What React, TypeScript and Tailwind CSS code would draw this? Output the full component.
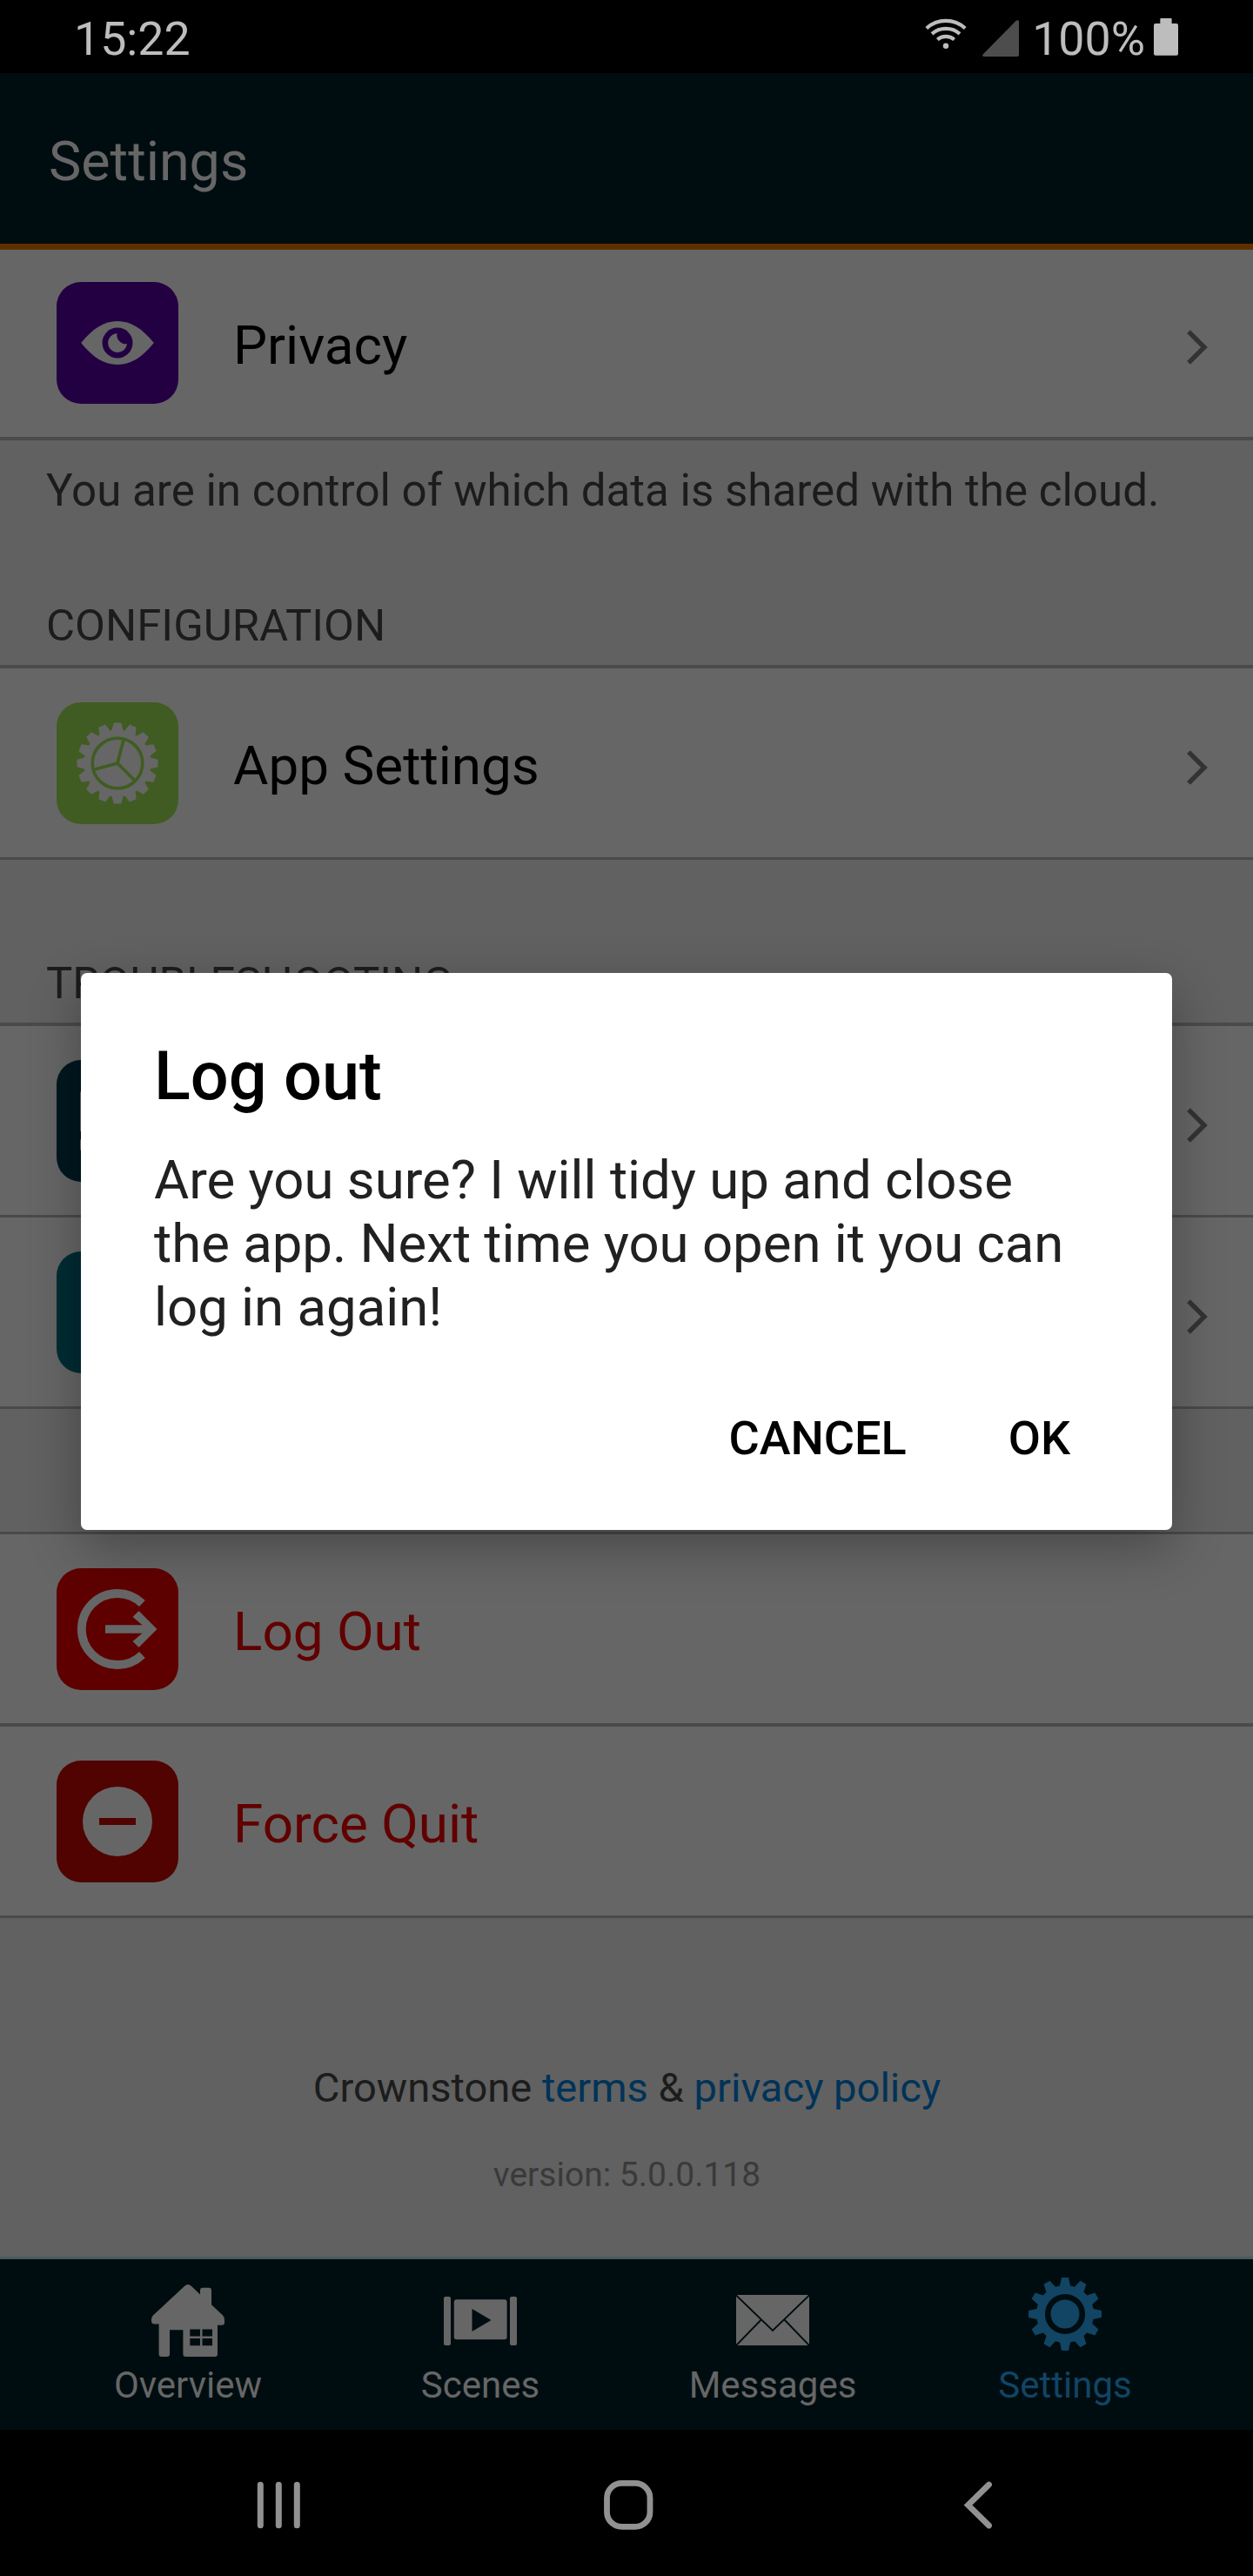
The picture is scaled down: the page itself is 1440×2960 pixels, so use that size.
import React from "react";

function gearPath(cx: number, cy: number, teeth: number, outer: number, root: number, top: number, base: number) {
  const points: string[] = [];
  for (let i = 0; i < teeth; i++) {
    const a = (i * 2 * Math.PI) / teeth;
    const corners = [
      [-base / 2, -root],
      [-top / 2, -outer],
      [top / 2, -outer],
      [base / 2, -root],
    ];
    for (const [x, y] of corners) {
      const px = cx + x * Math.cos(a) - y * Math.sin(a);
      const py = cy + x * Math.sin(a) + y * Math.cos(a);
      points.push(`${px.toFixed(2)} ${py.toFixed(2)}`);
    }
  }
  return `M${points.join("L")}Z`;
}

const EyeIcon = () => (
  <svg viewBox="0 0 140 140" className="size-full">
    <path d="M28.2 70C42 53 55 45 70 45s28 8 41.8 25C98 87 85 95 70 95S42 87 28.2 70Z" fill="#666" />
    <circle cx="70" cy="70" r="17.5" fill="#230042" />
    <path d="M69.5 59A11 11 0 1 0 81 71A10 10 0 0 1 69.5 59Z" fill="#666" />
  </svg>
);

const WheelIcon = () => (
  <svg viewBox="0 0 140 140" className="size-full">
    <path d={gearPath(70, 70, 16, 46.5, 38, 8.4, 13)} fill="#666" />
    <g fill="none" stroke="#405c22" strokeWidth="3.6">
      <circle cx="70" cy="70" r="28.8" />
      <path d="M70 70L77 43M70 70L42.5 77.5M70 70L90 90" />
    </g>
  </svg>
);

const CardIcon = () => (
  <svg viewBox="0 0 140 140" className="size-full" fill="#666">
    <rect x="27" y="35" width="86" height="48" rx="3" />
    <rect x="27" y="90" width="86" height="15" rx="3" />
  </svg>
);

const HelpIcon = () => (
  <svg viewBox="0 0 140 140" className="size-full" fill="none" stroke="#666" strokeWidth="7">
    <circle cx="70" cy="70" r="36" />
  </svg>
);

const LogOutIcon = () => (
  <svg viewBox="0 0 140 140" className="size-full">
    <path d="M98.4 40.6A41 41 0 1 0 98.4 99.4" fill="none" stroke="#666" strokeWidth="9.8" />
    <path d="M56 65.2H98.5L87.5 56L94.5 49L115.5 70L94.5 91L87.5 84L98.5 74.8H56Z" fill="#666" />
  </svg>
);

const MinusIcon = () => (
  <svg viewBox="0 0 140 140" className="size-full">
    <circle cx="70" cy="70" r="40" fill="#666" />
    <rect x="49" y="66" width="42" height="8" fill="#500300" />
  </svg>
);

function Row({
  tile,
  icon,
  label,
  labelColor = "text-black",
  chevron = false,
  first = false,
}: {
  tile: string;
  icon: React.ReactNode;
  label?: string;
  labelColor?: string;
  chevron?: boolean;
  first?: boolean;
}) {
  return (
    <div
      className={`flex shrink-0 items-start bg-[#666] pr-[52px] pl-[65px] ${
        first ? "h-[215px] pt-[37px]" : "h-[217px] pt-[39px]"
      }`}
    >
      <div className={`size-[140px] shrink-0 overflow-hidden rounded-[28px] ${tile}`}>{icon}</div>
      {label && <div className={`ml-[63px] flex h-[145px] items-center text-[62px] ${labelColor}`}>{label}</div>}
      {chevron && (
        <svg viewBox="0 0 24 40" className="mt-[55px] ml-auto h-[40px] w-[24px]" fill="none" stroke="#333" strokeWidth="5.4">
          <path d="M2 2.2L20 20L2 37.8" />
        </svg>
      )}
    </div>
  );
}

const Line = ({ thick = false }: { thick?: boolean }) => (
  <div className={`w-full shrink-0 bg-[#4a4a4a] ${thick ? "h-[4px]" : "h-[3px]"}`} />
);

const HouseIcon = () => (
  <svg viewBox="0 0 84 92" className="h-[92px] w-[84px]">
    <path
      d="M38.5 9.5Q42 6.5 45.5 9.5L56 19.5V15Q56 11.7 59 11.7H66Q69 11.7 69 15V31.3L82 43.5Q84 45.5 84 49V51.5Q84 54.7 81 54.7H76V88Q76 91 73 91H39.5Q36.4 91 36.4 88V60.3H21V88Q21 91 18 91H11.5Q8.6 91 8.6 88V53.5H4Q0 53.5 0 50V48Q0 45 2.5 43Z"
      fill="#666"
    />
    <path d="M44.3 59.5H56V67.4H44.3ZM58.5 59.5H70V67.4H58.5ZM44.3 70H56V78.3H44.3ZM58.5 70H70V78.3H58.5Z" fill="#000d10" />
  </svg>
);

const ScenesIcon = () => (
  <svg viewBox="0 0 84 92" className="h-[92px] w-[84px]" fill="#666">
    <rect x="0" y="22" width="8" height="56" rx="2" />
    <rect x="76" y="22" width="8" height="56" rx="2" />
    <rect x="11.8" y="25.3" width="60.8" height="46" rx="3" />
    <path d="M32.5 36L54.5 49L32.5 62Z" fill="#000d10" />
  </svg>
);

const MailIcon = () => (
  <svg viewBox="0 0 84 92" className="h-[92px] w-[84px]">
    <rect x="0" y="20" width="84" height="58" rx="2" fill="#666" />
    <path d="M0 20.5L42 61L84 20.5M0 78L28.8 48.5M84 78L55.5 48.5" fill="none" stroke="#000d10" strokeWidth="1.9" />
  </svg>
);

const GearIcon = () => (
  <svg viewBox="0 0 84 92" className="h-[92px] w-[84px]">
    <path d={gearPath(42, 42, 12, 42, 32.5, 8, 12)} fill="#124464" />
    <circle cx="42" cy="42" r="19.8" fill="none" stroke="#000d10" strokeWidth="6.6" />
  </svg>
);

function Tab({ icon, label, color }: { icon: React.ReactNode; label: string; color: string }) {
  return (
    <div className={`flex flex-1 flex-col items-center pt-[21px] ${color}`}>
      {icon}
      <div className="mt-[7px] text-[42px] leading-[50px]">{label}</div>
    </div>
  );
}

export default function App() {
  return (
    <div className="relative flex h-[2960px] w-[1440px] flex-col overflow-hidden bg-[#616161] font-[Roboto,sans-serif] whitespace-nowrap">
      {/* Status bar */}
      <div className="flex h-[84px] shrink-0 items-start bg-black pr-[86px] pl-[85px] text-[#bdbdbd]">
        <div className="text-[53.7px] leading-[89px]">15:22</div>
        <svg viewBox="0 0 48 36" className="mt-[20px] ml-auto h-[36px] w-[48px]" fill="none" stroke="#bdbdbd" strokeWidth="4.2">
          <path d="M1.8 12.5A33 33 0 0 1 46.2 12.5M8 18.8A24.5 24.5 0 0 1 40 18.8M14.3 25.5A15 15 0 0 1 33.7 25.5" />
          <circle cx="24" cy="32.7" r="3.2" fill="#bdbdbd" stroke="none" />
        </svg>
        <svg viewBox="0 0 42 42" className="mt-[23px] ml-[18px] size-[42px]" fill="#4d4d4d">
          <path d="M.6 39.5L39 .6Q42 -.8 42 2V40Q42 42 40 42H1.5Q-.6 41.5 .6 39.5Z" />
        </svg>
        <div className="ml-[15px] text-[53.7px] leading-[89px]">100%</div>
        <svg viewBox="0 0 28 43" className="mt-[21px] ml-[10px] h-[43px] w-[28px]" fill="#bdbdbd">
          <rect x="7.3" y="0" width="13.3" height="10" rx="1" />
          <rect x="0" y="6" width="28" height="36.7" rx="2" />
        </svg>
      </div>

      {/* Title bar */}
      <div className="flex h-[196px] shrink-0 items-center bg-[#000d10] pt-[8px] pl-[56px] text-[62.8px] text-[#666]">Settings</div>
      <div className="h-[7px] shrink-0 bg-[#5e3000]" />

      <Row first tile="bg-[#230042]" icon={<EyeIcon />} label="Privacy" chevron />
      <Line thick />
      <div className="flex h-[258px] shrink-0 flex-col justify-between pt-[28px] pb-[15px] pl-[53px] text-[51.1px] leading-[60px] text-[#1c1c1c]">
        <div>You are in control of which data is shared with the cloud.</div>
        <div className="text-[50.8px]">CONFIGURATION</div>
      </div>
      <Line thick />
      <Row tile="bg-[#405c22]" icon={<WheelIcon />} label="App Settings" chevron />
      <Line />
      <div className="flex h-[187px] shrink-0 flex-col justify-end pb-[15px] pl-[53px] text-[50.8px] leading-[60px] text-[#1c1c1c]">
        TROUBLESHOOTING
      </div>
      <Line thick />
      <Row tile="bg-[#00171f]" icon={<CardIcon />} chevron />
      <Line />
      <Row tile="bg-[#002c33]" icon={<HelpIcon />} chevron />
      <Line />
      <div className="h-[141px] shrink-0" />
      <Line />
      <Row tile="bg-[#5f0000]" icon={<LogOutIcon />} label="Log Out" labelColor="text-[#600000]" />
      <Line thick />
      <Row tile="bg-[#500300]" icon={<MinusIcon />} label="Force Quit" labelColor="text-[#600000]" />
      <Line />

      {/* Footer */}
      <div className="flex flex-1 flex-col items-center pt-[165px] pl-px">
        <div className="text-[47.1px] leading-[60px] text-[#1c1c1c]">
          Crownstone <span className="text-[#003358]">terms</span> &amp; <span className="text-[#003358]">privacy policy</span>
        </div>
        <div className="mt-[45px] text-[39px] leading-[50px] text-[#3a3a3a]">version: 5.0.0.118</div>
      </div>

      {/* Tab bar */}
      <div className="h-[3px] shrink-0 bg-[#4b5a5c]" />
      <div className="flex h-[196px] shrink-0 bg-[#000d10] px-[48px]">
        <Tab icon={<HouseIcon />} label="Overview" color="text-[#666]" />
        <Tab icon={<ScenesIcon />} label="Scenes" color="text-[#666]" />
        <Tab icon={<MailIcon />} label="Messages" color="text-[#666]" />
        <Tab icon={<GearIcon />} label="Settings" color="text-[#124464]" />
      </div>

      {/* System navigation */}
      <div className="flex h-[168px] shrink-0 items-start bg-black pt-[58px] pr-[299px] pl-[295px]">
        <svg viewBox="0 0 51 58" className="h-[58px] w-[51px]" fill="#919191">
          <rect x=".8" y="1.7" width="7" height="53.5" rx="3.5" />
          <rect x="21.8" y="1.7" width="7" height="53.5" rx="3.5" />
          <rect x="42.8" y="1.7" width="7" height="53.5" rx="3.5" />
        </svg>
        <svg viewBox="0 0 58 58" className="ml-[347px] size-[58px]" fill="none" stroke="#919191" strokeWidth="6.8">
          <rect x="4.5" y="3.4" width="49.500" height="50" rx="17" />
        </svg>
        <svg viewBox="0 0 34 58" className="ml-auto h-[58px] w-[34px]" fill="none" stroke="#919191" strokeWidth="6.8" strokeLinecap="round">
          <path d="M29.5 5L5.500 28.5L29.5 52" />
        </svg>
      </div>

      {/* Dialog */}
      <div className="absolute inset-x-0 top-[84px] bottom-[168px] flex items-center justify-center">
        <div className="flex h-[640px] w-[1254px] flex-col rounded-[7px] bg-white pt-[74px] pr-[84px] pl-[84px] shadow-[0_20px_60px_rgba(0,0,0,0.3)]">
          <div className="text-[77.5px] leading-[90px] font-medium text-black">Log out</div>
          <div className="mt-[38px] text-[61.7px] leading-[73px] text-[#212121]">
            Are you sure? I will tidy up and close
            <br />
            the app. Next time you open it you can
            <br />
            log in again!
          </div>
          <div className="mt-[82px] flex justify-end gap-[117px] pr-[33px] text-[54px] leading-[64px] font-medium text-black">
            <div>CANCEL</div>
            <div>OK</div>
          </div>
        </div>
      </div>
    </div>
  );
}
